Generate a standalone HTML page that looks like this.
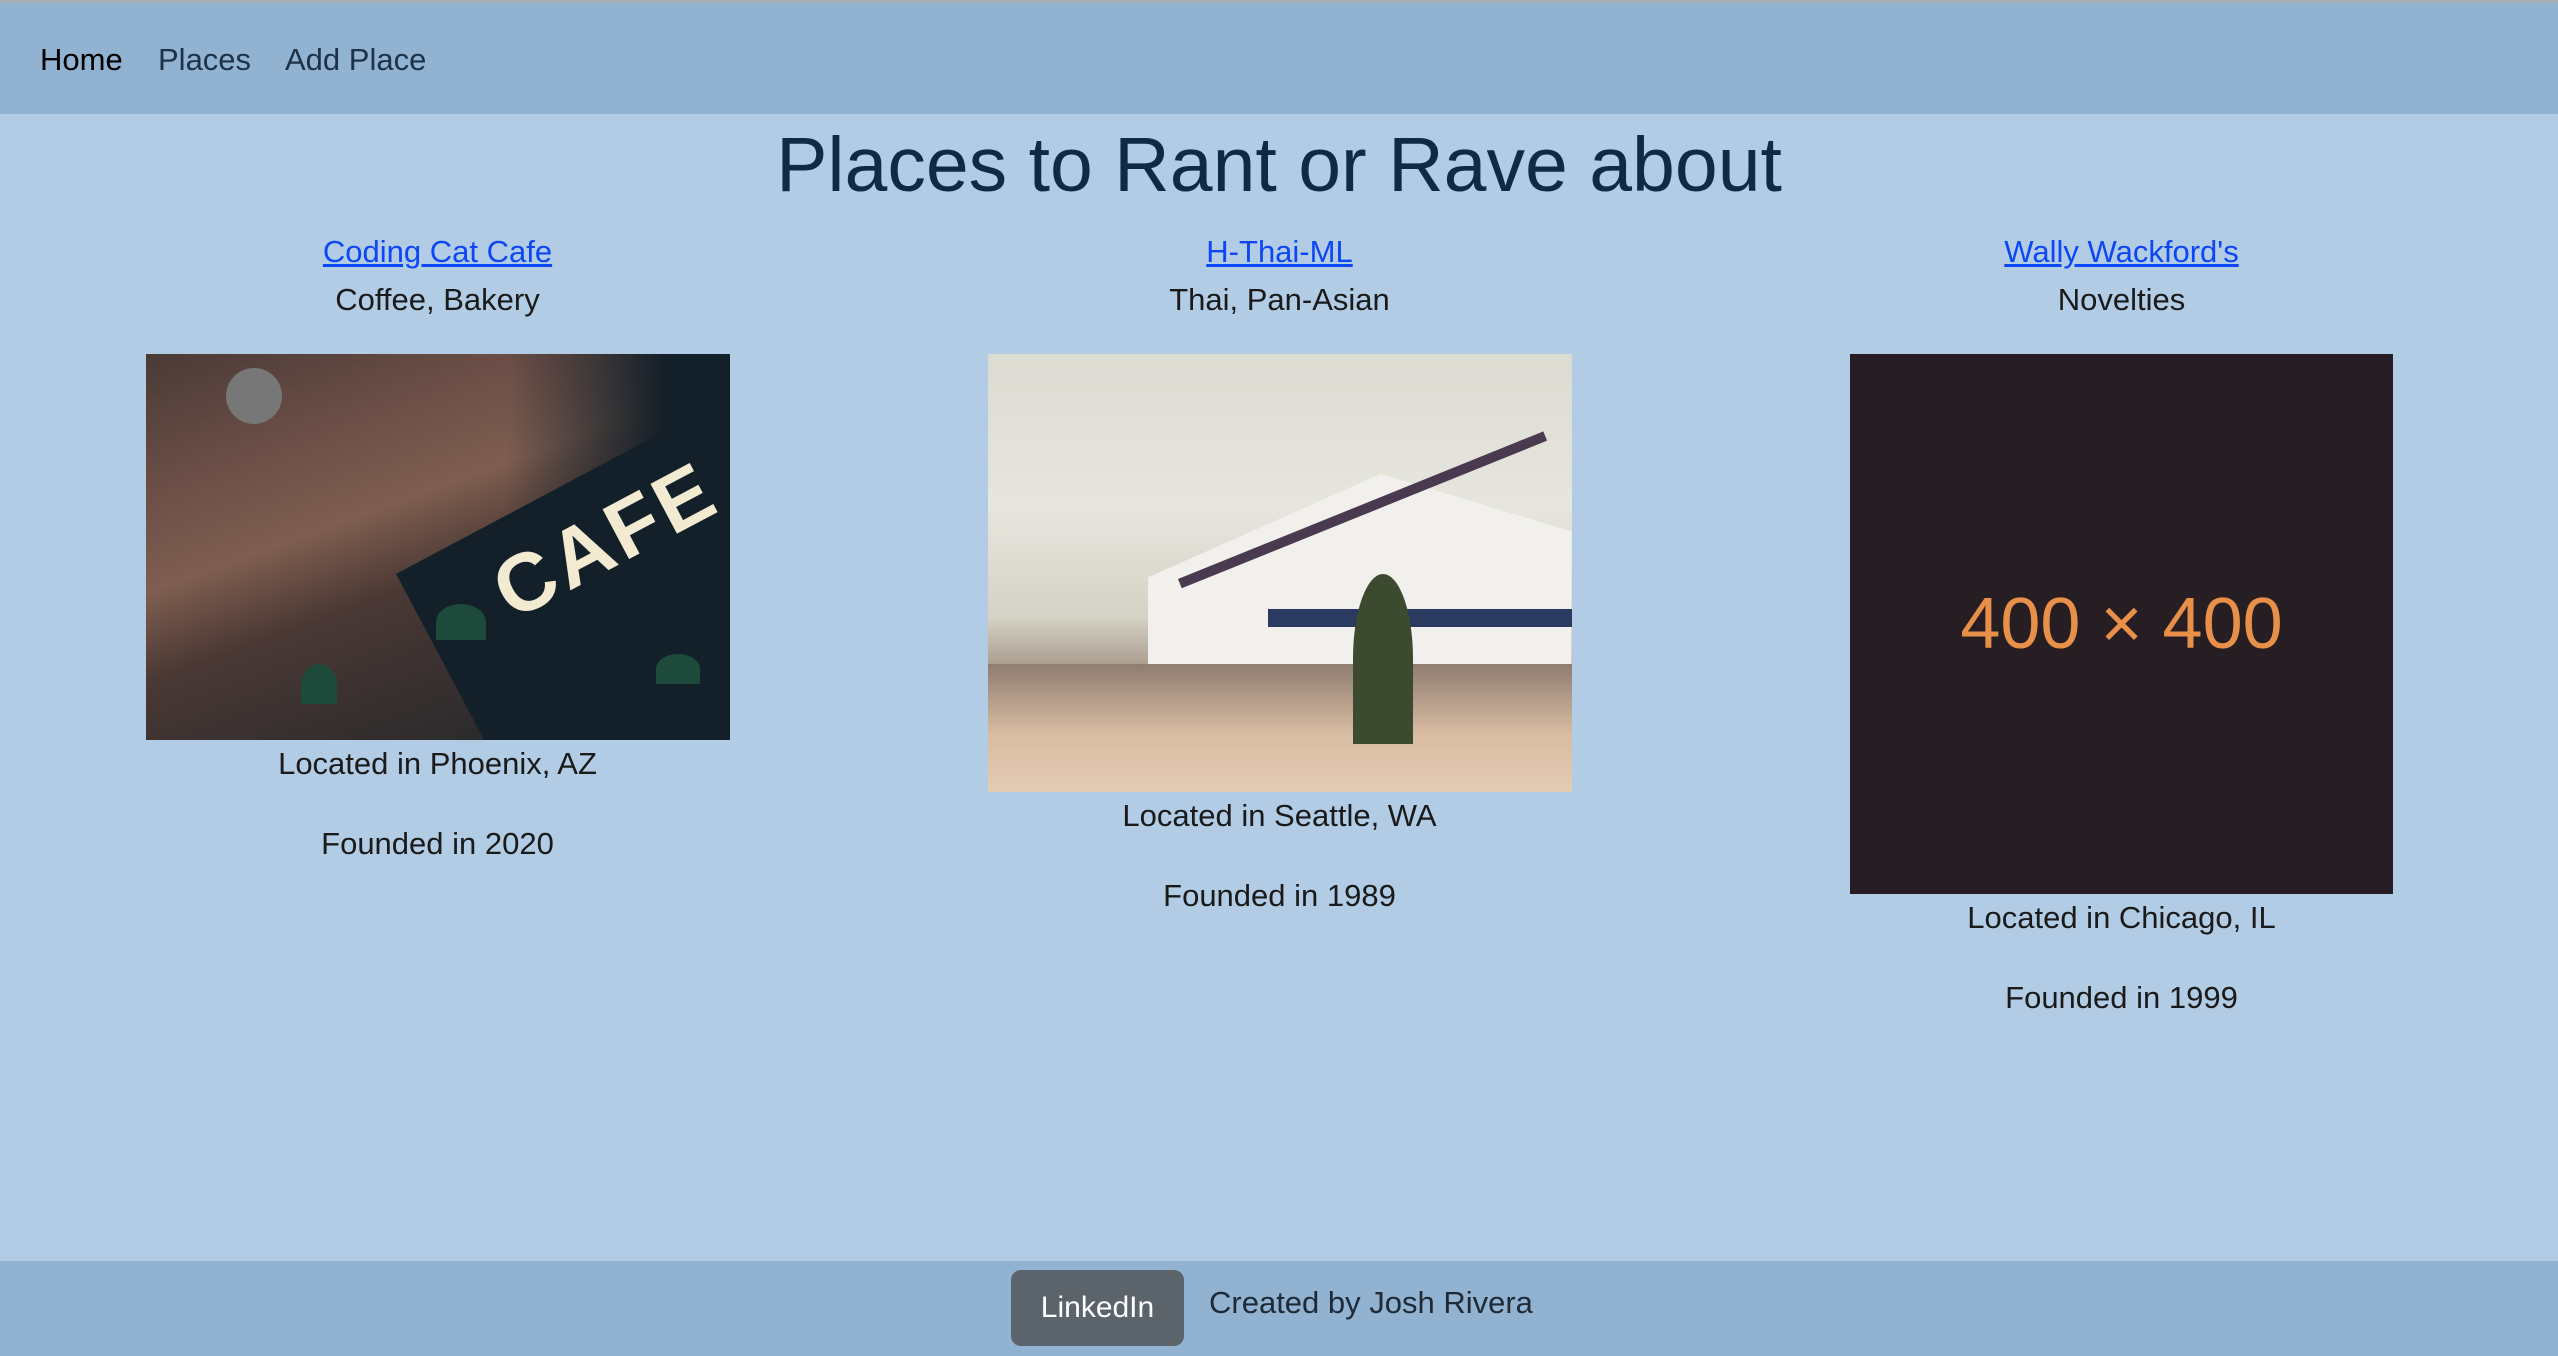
<!DOCTYPE html>
<html><head><meta charset="utf-8"><style>
*{box-sizing:border-box;margin:0;padding:0}
body{width:2558px;height:1356px;background:#b1cce4;font-family:"Liberation Sans",Arial,sans-serif;position:relative;overflow:hidden;color:#1a1a1a}
.top{position:absolute;left:0;top:0;width:2558px;height:3px;background:#a8aeb4}
nav{position:absolute;left:0;top:3px;width:2558px;height:111px;background:#91b3d1}
nav span{position:absolute;top:39px;font-size:31px;color:#1d3248}
h1{position:absolute;left:0;width:2558px;top:121px;text-align:center;font-size:77px;font-weight:500;color:#0f2a45}
.col{position:absolute;top:228px;width:843px;text-align:center;font-size:31px}
.col a{color:#0d47f5;text-decoration:underline;display:block;height:48px;line-height:48px}
.col .cat{height:48px;line-height:48px}
.col .img{margin:30px auto 0;position:relative;overflow:hidden}
.col p{line-height:48px}
footer{position:absolute;left:0;top:1261px;width:2558px;height:95px;background:#91b3d1}
.btn{position:absolute;left:1011px;top:9px;width:173px;height:76px;background:#5b636b;border-radius:10px;color:#fff;font-size:30px;text-align:center;line-height:76px}
.cred{position:absolute;left:1209px;top:24px;font-size:31px;color:#1f2a36}
</style></head><body>
<div class="top"></div>
<nav><span style="left:40px;color:#000">Home</span><span style="left:158px">Places</span><span style="left:285px">Add Place</span></nav>
<h1>Places to Rant or Rave about</h1>

<div class="col" style="left:16px">
<a>Coding Cat Cafe</a><div class="cat">Coffee, Bakery</div>
<div class="img" style="width:584px;height:386px;background:linear-gradient(160deg,#4a3a36 0%,#6e5048 25%,#7f5e50 40%,#4a3834 55%,#1b2328 100%)">
<div style="position:absolute;left:250px;top:220px;width:500px;height:400px;background:#142029;transform:rotate(-28deg);transform-origin:0 0"></div>
<div style="position:absolute;left:360px;top:0;width:224px;height:386px;background:linear-gradient(90deg,rgba(20,32,41,0),#142029 70%)"></div>
<div style="position:absolute;left:340px;top:140px;font-size:82px;font-weight:bold;color:#f3ead2;transform:rotate(-28deg);letter-spacing:4px">CAFE</div>
<div style="position:absolute;left:80px;top:14px;width:56px;height:56px;border-radius:50%;background:#777"></div>
<div style="position:absolute;left:290px;top:250px;width:50px;height:36px;border-radius:50% 50% 0 0;background:#1d4a3a"></div>
<div style="position:absolute;left:155px;top:310px;width:36px;height:40px;border-radius:50% 50% 0 0;background:#1d4a3a"></div>
<div style="position:absolute;left:510px;top:300px;width:44px;height:30px;border-radius:50% 50% 0 0;background:#1d4a3a"></div>
</div>
<p>Located in Phoenix, AZ</p><p style="margin-top:32px">Founded in 2020</p>
</div>

<div class="col" style="left:858px">
<a>H-Thai-ML</a><div class="cat">Thai, Pan-Asian</div>
<div class="img" style="width:584px;height:438px;background:linear-gradient(180deg,#dcdbd2 0%,#e7e6de 35%,#d5d2c6 60%,#9c8b7c 75%,#cfb39a 82%,#e3c9b2 100%)">
<div style="position:absolute;left:160px;top:120px;width:424px;height:230px;background:#f1f0ec;clip-path:polygon(0 45%,55% 0,100% 25%,100% 100%,0 100%)"></div>
<div style="position:absolute;left:190px;top:190px;width:394px;height:10px;background:#4a3a50;transform:rotate(-22deg);transform-origin:0 0;top:225px"></div>
<div style="position:absolute;left:280px;top:255px;width:304px;height:18px;background:#2a3a60"></div>
<div style="position:absolute;left:0;top:310px;width:584px;height:128px;background:linear-gradient(180deg,#8f7d70,#d8bba2 55%,#e4cbb4)"></div>
<div style="position:absolute;left:365px;top:220px;width:60px;height:170px;background:#3c4a30;border-radius:50% 50% 0 0"></div>
</div>
<p>Located in Seattle, WA</p><p style="margin-top:32px">Founded in 1989</p>
</div>

<div class="col" style="left:1700px">
<a>Wally Wackford's</a><div class="cat">Novelties</div>
<div class="img" style="width:543px;height:540px;background:#261e23;color:#e8904a;font-size:72px;line-height:540px">400 × 400</div>
<p>Located in Chicago, IL</p><p style="margin-top:32px">Founded in 1999</p>
</div>

<footer><div class="btn">LinkedIn</div><div class="cred">Created by Josh Rivera</div></footer>
</body></html>
